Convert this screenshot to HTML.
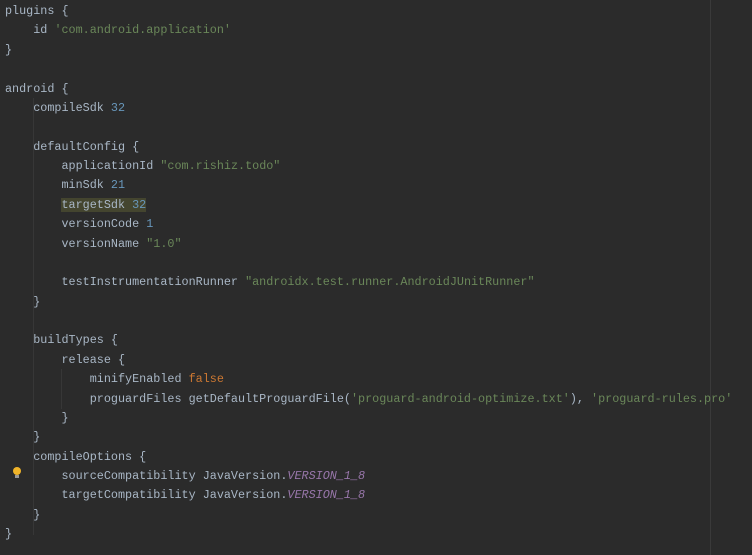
<html><head><style>
body{margin:0;background:#2b2b2b;width:752px;height:555px;overflow:hidden;position:relative}
pre{margin:0;position:absolute;left:5px;top:2px;font-family:"Liberation Mono",monospace;font-size:11.77px;line-height:19.37px;color:#a9b7c6}
.s{color:#6a8759}.n{color:#6897bb}.k{color:#cc7832}.f{color:#9876aa;font-style:italic}
.h{background:#44452f}
.m{position:absolute;left:710px;top:0;width:1px;height:555px;background:#3a3a3a}
.g{position:absolute;width:1px;background:#373737}
.bulb{position:absolute;left:13px;top:467px;width:8px;height:8px;border-radius:50%;background:#f0b429}
.bulb:after{content:"";position:absolute;left:2px;top:8px;width:4px;height:3px;background:#999}
</style></head><body>
<div class="m"></div>
<div class="g" style="left:33px;top:98px;height:437px"></div>
<div class="g" style="left:33px;top:156px;height:135px"></div>
<div class="g" style="left:61px;top:369px;height:40px"></div>
<div class="g" style="left:33px;top:466px;height:40px"></div>
<div class="bulb"></div>
<pre>plugins {
    id <span class="s">'com.android.application'</span>
}

android {
    compileSdk <span class="n">32</span>

    defaultConfig {
        applicationId <span class="s">"com.rishiz.todo"</span>
        minSdk <span class="n">21</span>
        <span class="h">targetSdk <span class="n">32</span></span>
        versionCode <span class="n">1</span>
        versionName <span class="s">"1.0"</span>

        testInstrumentationRunner <span class="s">"androidx.test.runner.AndroidJUnitRunner"</span>
    }

    buildTypes {
        release {
            minifyEnabled <span class="k">false</span>
            proguardFiles getDefaultProguardFile(<span class="s">'proguard-android-optimize.txt'</span>), <span class="s">'proguard-rules.pro'</span>
        }
    }
    compileOptions {
        sourceCompatibility JavaVersion.<span class="f">VERSION_1_8</span>
        targetCompatibility JavaVersion.<span class="f">VERSION_1_8</span>
    }
}</pre>
</body></html>
